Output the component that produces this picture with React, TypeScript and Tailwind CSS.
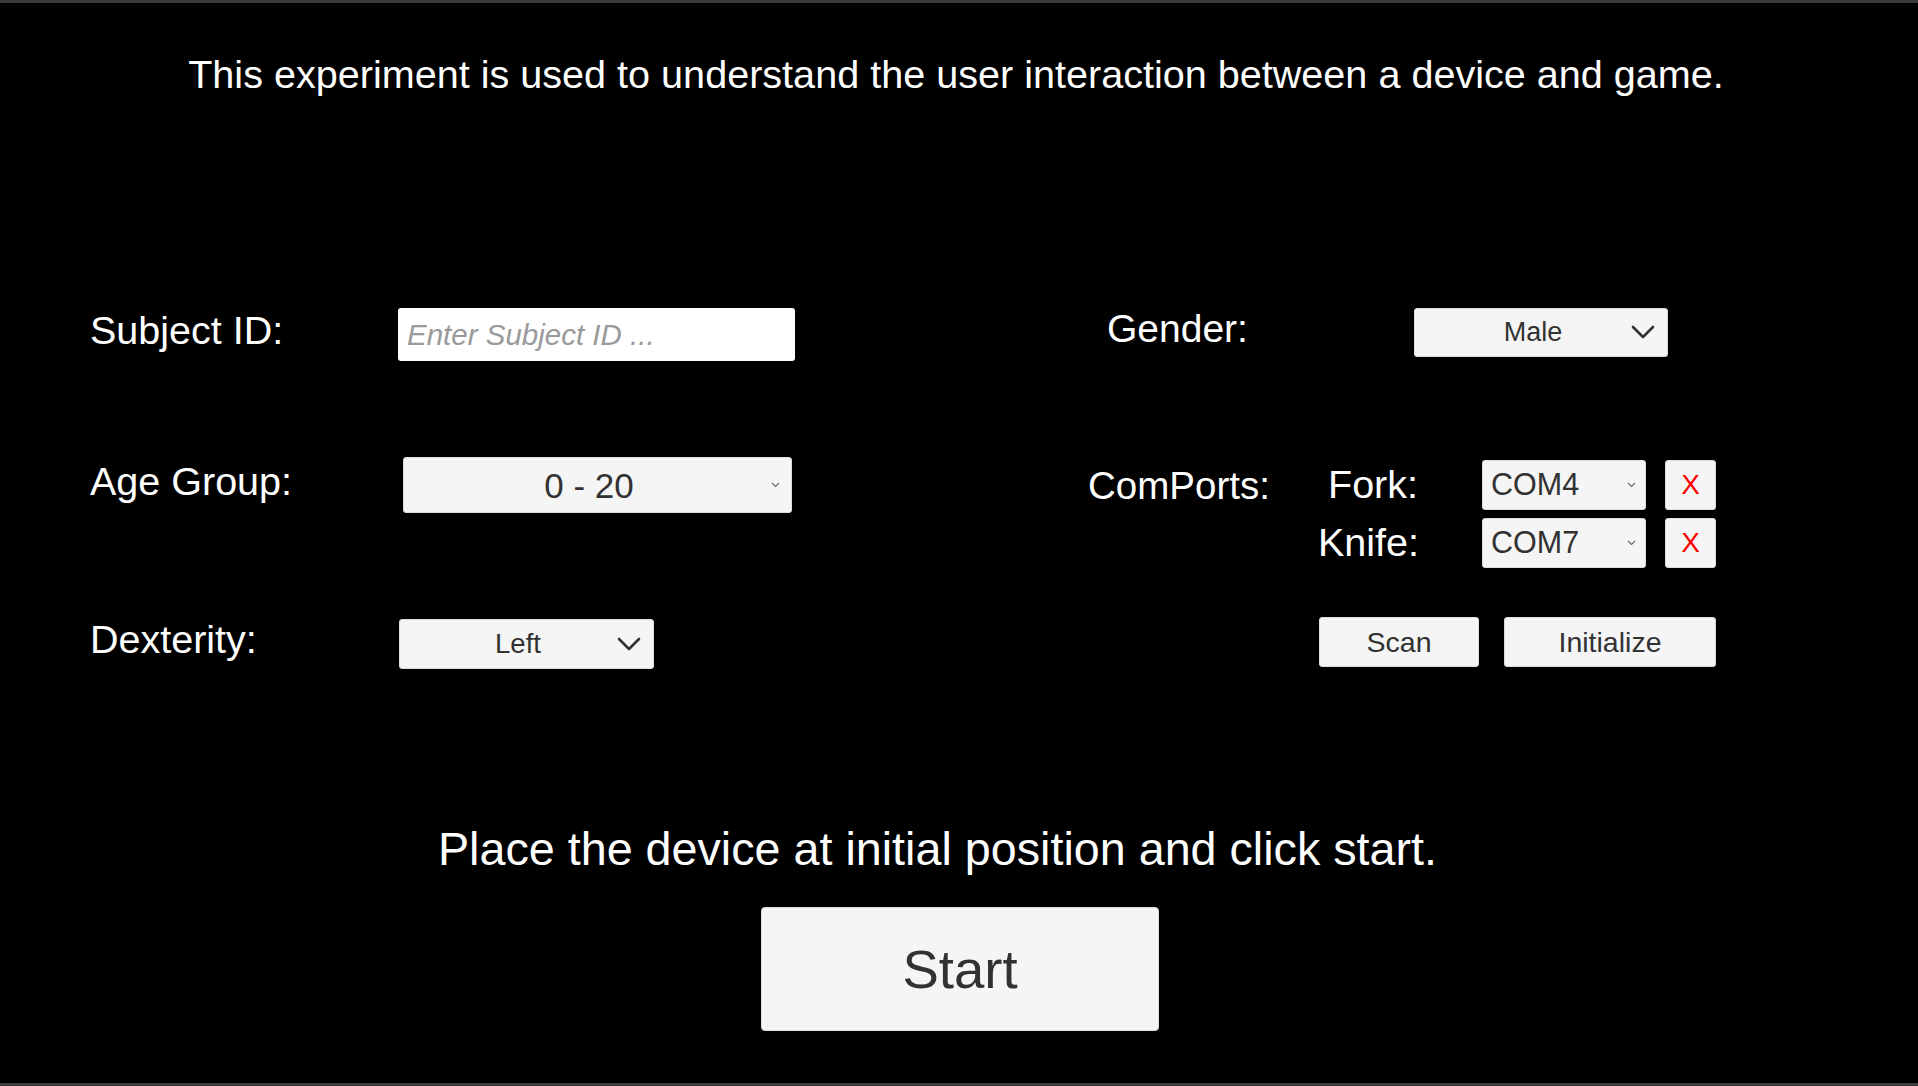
import { useState } from "react";

const FONT = "font-['Liberation_Sans',Arial,sans-serif]";

function BigChevron() {
  return (
    <svg width="24" height="14" viewBox="0 0 24 14" className="absolute right-[12px] top-1/2 -translate-y-1/2">
      <path d="M2 2 L12 12 L22 2" fill="none" stroke="#323232" strokeWidth="2.6" strokeLinecap="round" strokeLinejoin="round" />
    </svg>
  );
}

function SmallChevron({ right }: { right: string }) {
  return (
    <svg width="9" height="6" viewBox="0 0 9 6" className={`absolute ${right} top-1/2 -translate-y-1/2`}>
      <path d="M1 1 L4.5 4.5 L8 1" fill="none" stroke="#666" strokeWidth="1.1" />
    </svg>
  );
}

function XButton() {
  return (
    <button className="w-[51px] h-[50px] rounded-[3px] bg-[#f5f5f5] border border-[#dcdcdc] flex items-center justify-center text-[28px] leading-none text-[#ff0000]">
      X
    </button>
  );
}

function ComRow({ label, port }: { label: string; port: string }) {
  return (
    <div className="flex items-center h-[50px]">
      <span className="w-[100px] text-right text-[39.5px] leading-none text-white">{label}</span>
      <div className="relative ml-[64px] w-[164px] h-[50px] rounded-[3px] bg-[#f5f5f5] border border-[#dcdcdc] flex items-center pl-[8px] text-[30.5px] leading-none text-[#323232]">
        {port}
        <SmallChevron right="right-[9px]" />
      </div>
      <div className="ml-[19px]">
        <XButton />
      </div>
    </div>
  );
}

export default function App() {
  const [subjectId, setSubjectId] = useState("");

  return (
    <div className={`${FONT} w-full h-[1086px] bg-black border-t-[3px] border-b-[3px] border-[#3c3c3c] flex flex-col overflow-hidden`}>
      {/* header */}
      <p className="pt-[52px] pr-[6px] text-center text-[39.6px] leading-none text-white">
        This experiment is used to understand the user interaction between a device and game.
      </p>

      {/* form */}
      <div className="mt-[213px] flex">
        {/* left column */}
        <div className="ml-[90px] w-[998px] flex flex-col">
          <div className="flex items-center h-[53px]">
            <span className="w-[308px] pb-[6px] text-[39.5px] leading-none text-white">Subject ID:</span>
            <input
              value={subjectId}
              onChange={(e) => setSubjectId(e.target.value)}
              placeholder="Enter Subject ID ..."
              className="w-[397px] h-[53px] rounded-[3px] bg-white px-[9px] pt-[2px] text-[29.5px] italic text-[#323232] placeholder:text-[#9a9a9a] outline-none"
            />
          </div>

          <div className="mt-[96px] flex items-center h-[56px]">
            <span className="w-[308px] pb-[5px] text-[39.5px] leading-none text-white">Age Group:</span>
            <div className="relative ml-[5px] w-[389px] h-[56px] rounded-[3px] bg-[#f5f5f5] border border-[#dcdcdc] flex items-center justify-center pr-[17px] pt-[2px] text-[35px] leading-none text-[#323232]">
              0 - 20
              <SmallChevron right="right-[11px]" />
            </div>
          </div>

          <div className="mt-[106px] flex items-center h-[50px]">
            <span className="w-[308px] pb-[8px] text-[39.5px] leading-none text-white">Dexterity:</span>
            <div className="relative ml-[1px] w-[255px] h-[50px] rounded-[3px] bg-[#f5f5f5] border border-[#dcdcdc] flex items-center justify-center pr-[17px] pt-[1px] text-[27.5px] leading-none text-[#323232]">
              Left
              <BigChevron />
            </div>
          </div>
        </div>

        {/* right column */}
        <div className="flex flex-col">
          <div className="flex items-center h-[49px]">
            <span className="ml-[19px] w-[307px] pb-[7px] text-[39px] leading-none text-white">Gender:</span>
            <div className="relative w-[254px] h-[49px] rounded-[3px] bg-[#f5f5f5] border border-[#dcdcdc] flex items-center justify-center pr-[16px] pt-[1px] text-[27px] leading-none text-[#323232]">
              Male
              <BigChevron />
            </div>
          </div>

          <div className="mt-[103px] flex">
            <div className="w-[230px] h-[50px] flex items-center pt-[3px] text-[38.5px] leading-none text-white">ComPorts:</div>
            <div className="flex flex-col gap-[8px]">
              <ComRow label="Fork:" port="COM4" />
              <ComRow label="Knife:" port="COM7" />
            </div>
          </div>

          <div className="mt-[49px] ml-[231px] flex gap-[25px]">
            <button className="w-[160px] h-[50px] rounded-[3px] bg-[#f5f5f5] border border-[#dcdcdc] pt-[1px] text-[28.5px] leading-none text-[#323232]">
              Scan
            </button>
            <button className="w-[212px] h-[50px] rounded-[3px] bg-[#f5f5f5] border border-[#dcdcdc] pt-[1px] text-[28.5px] leading-none text-[#323232]">
              Initialize
            </button>
          </div>
        </div>
      </div>

      {/* bottom */}
      <p className="mt-[157px] pr-[43px] text-center text-[46.7px] leading-none text-white">
        Place the device at initial position and click start.
      </p>
      <div className="mt-[35px] flex justify-center pl-[2px]">
        <button className="w-[398px] h-[124px] rounded-[4px] bg-[#f5f5f5] border border-[#dcdcdc] pt-[2px] text-[54.5px] leading-none text-[#323232]">
          Start
        </button>
      </div>
    </div>
  );
}
